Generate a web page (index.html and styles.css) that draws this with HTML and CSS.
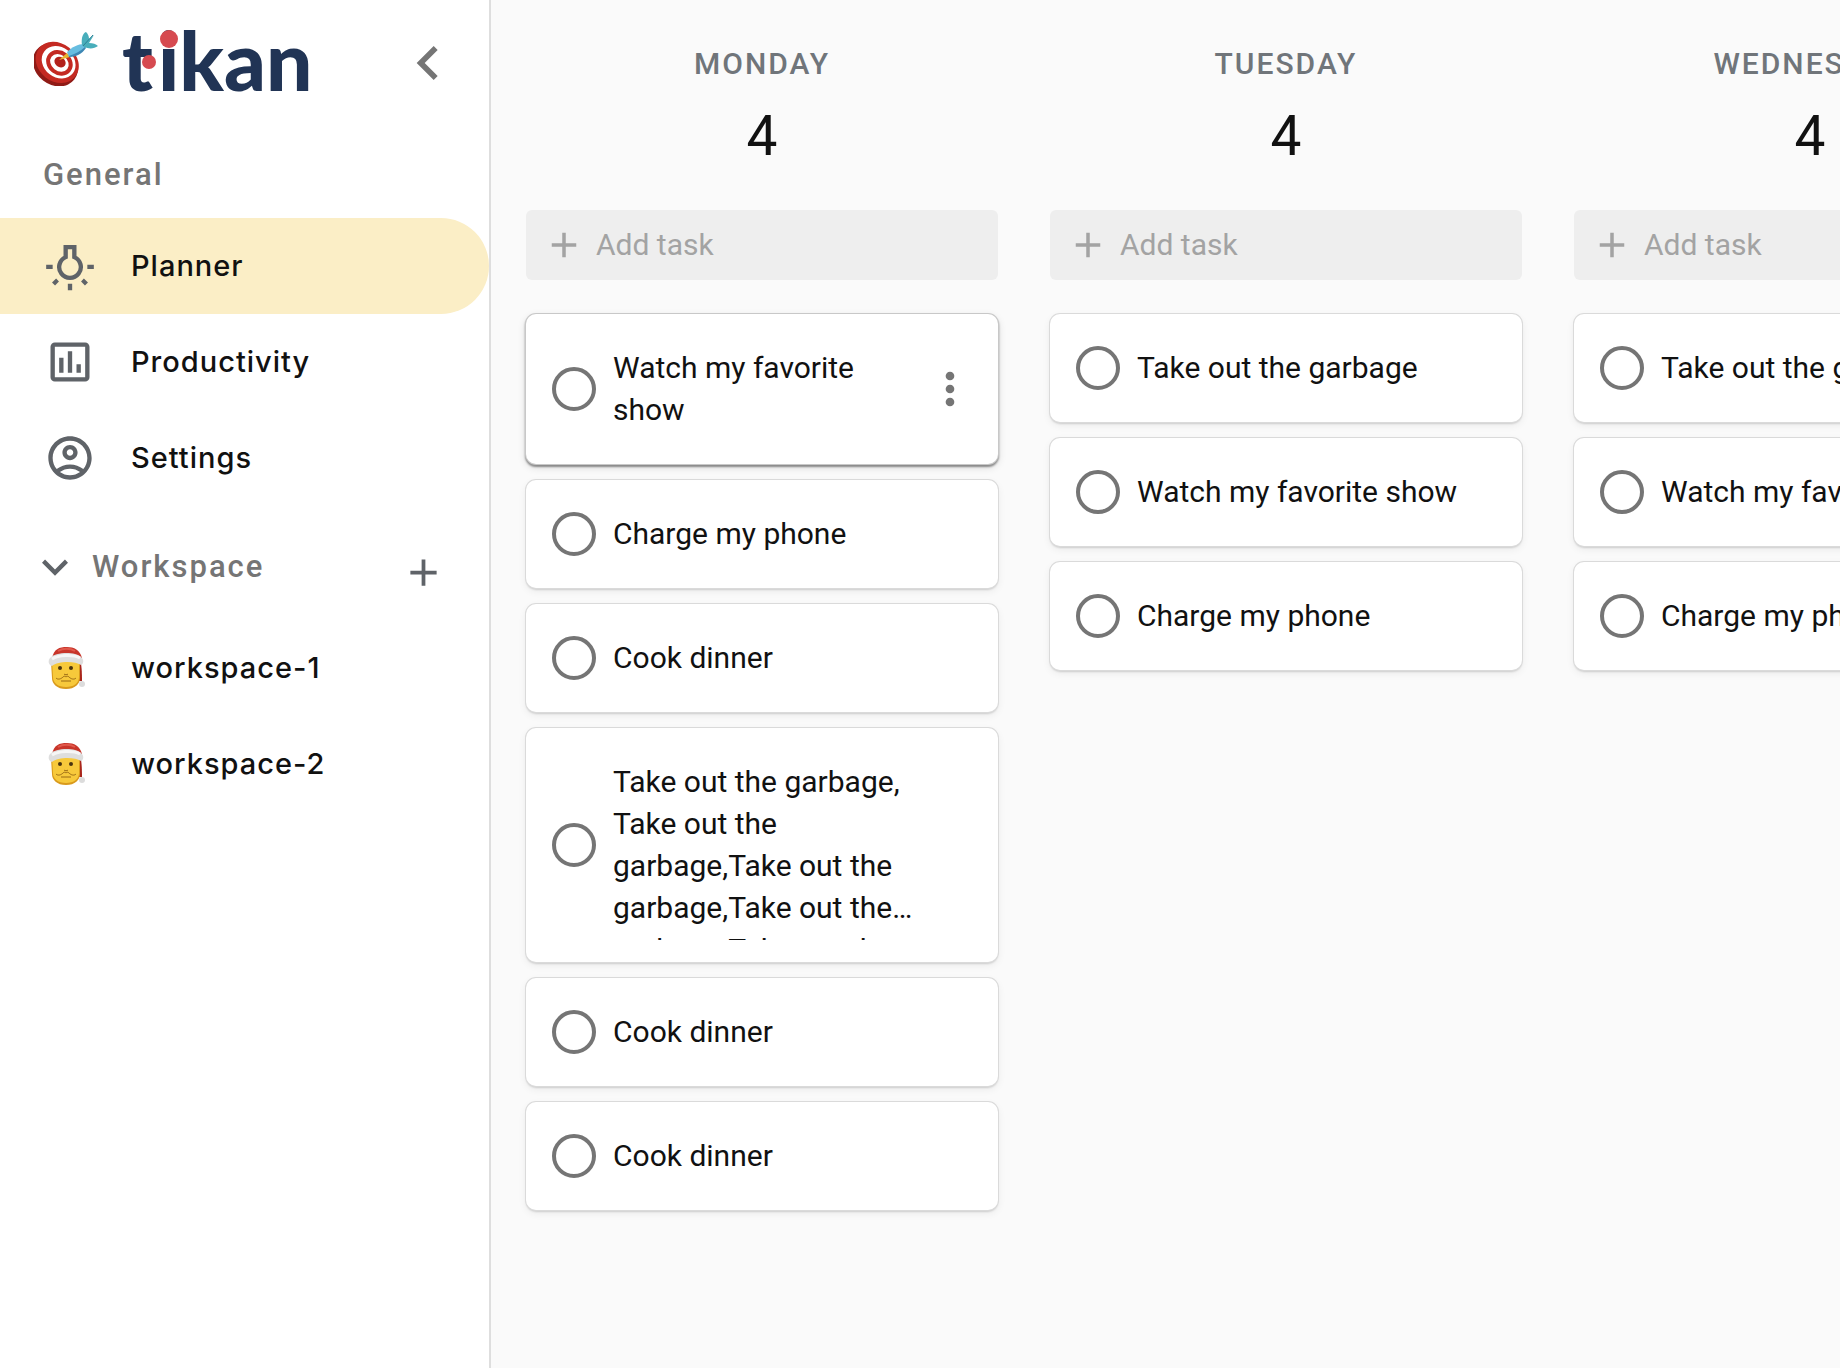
FILE: index.html
```html
<!DOCTYPE html>
<html lang="en">
<head>
<meta charset="utf-8">
<meta name="viewport" content="width=device-width, initial-scale=1">
<title>tikan - Planner</title>
<link rel="stylesheet" href="styles.css">
</head>
<body>
<svg class="sprite" aria-hidden="true">
  <symbol id="plus" viewBox="0 0 24 24"><path d="M19 13h-6v6h-2v-6H5v-2h6V5h2v6h6v2z"/></symbol>
  <symbol id="santa" viewBox="0 0 38 44">
    <path d="M27 4c5 5 7 12 7 31h-4L25 14z" fill="#a9261c"/>
    <path d="M3 16h29v16c0 6-5 11-14 11S4 38 4 32z" fill="#d99a1c"/>
    <path d="M4 15h27v16c0 6-5 10-13 10S5 37 5 31z" fill="#f7c93b"/>
    <path d="M4 12C6 3 11 1 19 1c7 0 13 3 15 11z" fill="#c8352a"/>
    <path d="M10 5c5-3 12-3 17 0" fill="none" stroke="#e0584b" stroke-width="2"/>
    <path d="M2 12c5-6 25-7 31-1 3 2 3 7 0 8-6-4-23-4-29 1-4-1-4-6-2-8z" fill="#dedede"/>
    <path d="M4 13c6-4 21-5 28-1" fill="none" stroke="#f6f6f6" stroke-width="3"/>
    <circle cx="12" cy="22" r="2" fill="#4a3410"/>
    <circle cx="23" cy="22" r="2" fill="#4a3410"/>
    <path d="M16 28c1 1 3 1 4 0M8 32c2 2 5 1 7-1 1-1 2-1 3 0 1-1 2-1 3 0 2 2 5 3 7 1M13 35h10" fill="none" stroke="#9a6a14" stroke-width="1"/>
    <circle cx="34" cy="38" r="3" fill="#dcdcdc"/>
  </symbol>
</svg>
<div class="app">
  <aside class="sidebar">
    <header class="brand">
      <svg class="brand-mark" viewBox="0 0 64 54" aria-hidden="true">
        <g transform="rotate(38 22 32)">
          <ellipse cx="22" cy="33" rx="24" ry="20" fill="#8f1b16"/>
          <ellipse cx="22" cy="30" rx="23" ry="19" fill="#c42a22"/>
          <ellipse cx="23" cy="29" rx="18" ry="15" fill="#fff"/>
          <ellipse cx="24" cy="29" rx="14" ry="12" fill="#c42a22"/>
          <ellipse cx="24" cy="29" rx="10" ry="8" fill="#fff"/>
          <ellipse cx="24" cy="28" rx="6" ry="5" fill="#b3221c"/>
        </g>
        <path d="M25 28l8-7 3 4z" fill="#e8b62f"/>
        <path d="M33 20c5-5 11-8 17-8l2 3c-4 6-10 9-17 10z" fill="#67bde0"/>
        <path d="M35 24c6-2 12-5 16-9l1 1c-4 6-10 9-17 9z" fill="#3d87b4"/>
        <path d="M48 13c-1-7 1-12 4-13 2 2 3 4 3 7l5-4-5 8c4 0 7 1 9 3-4 3-9 3-14 1z" fill="#48aebb"/>
        <path d="M49 14l10-11" stroke="#2d7f94" stroke-width="1"/>
      </svg>
      <svg class="brand-name" viewBox="0 0 200 64" role="img" aria-label="tikan">
        <text x="-1" y="60">t<tspan dx="5">ikan</tspan></text>
        <circle cx="46" cy="8" r="9"/>
        <circle cx="26" cy="31" r="7"/>
      </svg>
      <button class="icon-button collapse" type="button" aria-label="Collapse sidebar">
        <svg viewBox="0 0 24 24"><path d="M15.41 7.41L14 6l-6 6 6 6 1.41-1.41L10.83 12z"/></svg>
      </button>
    </header>

    <h2 class="section-title general">General</h2>
    <nav class="nav">
      <a class="nav-item active" href="#planner">
        <svg class="nav-icon" viewBox="0 0 24 24">
          <path d="M10 3.3h4v4.6a5 5 0 1 1-4 0z" fill="none" stroke="currentColor" stroke-width="2"/>
          <path d="M1 11.4h3v2H1zM20 11.4h3v2h-3zM11 20.2h2v3h-2zM3.7 19.6l1.9-1.8 1.3 1.4-1.8 1.8zM20.3 19.6l-1.9-1.8-1.3 1.4 1.8 1.8z"/>
        </svg>
        <span>Planner</span>
      </a>
      <a class="nav-item" href="#productivity">
        <svg class="nav-icon" viewBox="0 0 24 24"><path d="M9 17H7v-7h2v7zm4 0h-2V7h2v10zm4 0h-2v-4h2v4zm2 2H5V5h14v14zm0-16H5c-1.1 0-2 .9-2 2v14c0 1.1.9 2 2 2h14c1.1 0 2-.9 2-2V5c0-1.1-.9-2-2-2z"/></svg>
        <span>Productivity</span>
      </a>
      <a class="nav-item" href="#settings">
        <svg class="nav-icon" viewBox="0 0 24 24"><path d="M12 2C6.48 2 2 6.48 2 12s4.48 10 10 10 10-4.48 10-10S17.52 2 12 2zM7.35 18.5C8.66 17.56 10.26 17 12 17s3.34.56 4.65 1.5c-1.31.94-2.91 1.5-4.65 1.5s-3.34-.56-4.65-1.5zm10.79-1.38C16.45 15.8 14.32 15 12 15s-4.45.8-6.14 2.12C4.7 15.73 4 13.95 4 12c0-4.42 3.58-8 8-8s8 3.58 8 8c0 1.95-.7 3.73-1.86 5.12zM12 6c-1.93 0-3.5 1.57-3.5 3.5S10.07 13 12 13s3.5-1.57 3.5-3.5S13.93 6 12 6zm0 5c-.83 0-1.5-.67-1.5-1.5S11.17 8 12 8s1.5.67 1.5 1.5S12.83 11 12 11z"/></svg>
        <span>Settings</span>
      </a>
    </nav>

    <div class="workspace-head">
      <button class="icon-button toggle" type="button" aria-label="Toggle workspaces">
        <svg viewBox="0 0 24 24"><path d="M16.59 8.59L12 13.17 7.41 8.59 6 10l6 6 6-6z"/></svg>
      </button>
      <h2 class="section-title">Workspace</h2>
      <button class="icon-button add" type="button" aria-label="Add workspace">
        <svg><use href="#plus"/></svg>
      </button>
    </div>
    <nav class="nav">
      <a class="nav-item" href="#workspace-1"><svg class="avatar"><use href="#santa"/></svg><span>workspace-1</span></a>
      <a class="nav-item" href="#workspace-2"><svg class="avatar"><use href="#santa"/></svg><span>workspace-2</span></a>
    </nav>
  </aside>

  <main class="board">
    <section class="column">
      <h2 class="day">Monday</h2>
      <p class="date">4</p>
      <button class="add-task" type="button"><svg><use href="#plus"/></svg>Add task</button>
      <ul class="tasks">
        <li class="card raised">
          <input type="checkbox" id="m1"><label for="m1">Watch my favorite show</label>
          <button class="icon-button menu" type="button" aria-label="Task menu">
            <svg viewBox="0 0 24 24"><circle cx="12" cy="6" r="2"/><circle cx="12" cy="12" r="2"/><circle cx="12" cy="18" r="2"/></svg>
          </button>
        </li>
        <li class="card"><input type="checkbox" id="m2"><label for="m2">Charge my phone</label></li>
        <li class="card"><input type="checkbox" id="m3"><label for="m3">Cook dinner</label></li>
        <li class="card"><input type="checkbox" id="m4"><label for="m4">Take out the garbage, Take out the garbage,Take out the garbage,Take out the garbage,Take out the garbage,Take out the garbage</label></li>
        <li class="card"><input type="checkbox" id="m5"><label for="m5">Cook dinner</label></li>
        <li class="card"><input type="checkbox" id="m6"><label for="m6">Cook dinner</label></li>
      </ul>
    </section>
    <section class="column">
      <h2 class="day">Tuesday</h2>
      <p class="date">4</p>
      <button class="add-task" type="button"><svg><use href="#plus"/></svg>Add task</button>
      <ul class="tasks">
        <li class="card"><input type="checkbox" id="t1"><label for="t1">Take out the garbage</label></li>
        <li class="card"><input type="checkbox" id="t2"><label for="t2">Watch my favorite show</label></li>
        <li class="card"><input type="checkbox" id="t3"><label for="t3">Charge my phone</label></li>
      </ul>
    </section>
    <section class="column">
      <h2 class="day">Wednesday</h2>
      <p class="date">4</p>
      <button class="add-task" type="button"><svg><use href="#plus"/></svg>Add task</button>
      <ul class="tasks">
        <li class="card"><input type="checkbox" id="w1"><label for="w1">Take out the garbage</label></li>
        <li class="card"><input type="checkbox" id="w2"><label for="w2">Watch my favorite show</label></li>
        <li class="card"><input type="checkbox" id="w3"><label for="w3">Charge my phone</label></li>
      </ul>
    </section>
  </main>
</div>
</body>
</html>
```
FILE: styles.css
```css
* {
  box-sizing: border-box;
}

body {
  margin: 0;
  background: #fafafa;
  color: #111;
  font: 400 30px/42px Roboto, sans-serif;
}

h2,
p,
ul {
  margin: 0;
  padding: 0;
}

svg {
  display: block;
  fill: currentColor;
  flex: none;
}

button {
  font: inherit;
  border: 0;
  padding: 0;
  cursor: pointer;
}

.sprite {
  position: absolute;
  width: 0;
  height: 0;
}

.app {
  display: grid;
  grid-template-columns: 491px minmax(0, 1fr);
  min-height: 100vh;
}

/* Sidebar */
.sidebar {
  background: #fff;
  border-right: 2px solid #dedede;
}

.brand {
  display: flex;
  align-items: flex-start;
  padding: 29px 27px 0 34px;
  height: 154px;
}

.brand-mark {
  width: 64px;
  height: 54px;
  margin: 3px 25px 0 0;
}

.brand-name {
  width: 200px;
  height: 64px;
  margin-top: 2px;
  overflow: visible;
  color: #213455;
  font: 900 82px/64px Lato, sans-serif;
  font-variant-ligatures: none;
}

.brand-name circle {
  fill: #d64a50;
}

.icon-button {
  flex: none;
  background: none;
  color: #5f6368;
}

.collapse {
  margin-left: auto;
  color: #757575;
}

.collapse svg {
  width: 68px;
  height: 68px;
}

.section-title {
  color: #757575;
  font-size: 31px;
  font-weight: 500;
  line-height: 42px;
  letter-spacing: 2px;
}

.general {
  padding-left: 43px;
  margin-bottom: 22px;
}

.nav-item {
  display: flex;
  align-items: center;
  gap: 35px;
  height: 96px;
  padding-left: 44px;
  border-radius: 0 48px 48px 0;
  color: #111;
  font: 500 29px/42px Inter, sans-serif;
  letter-spacing: 1px;
  text-decoration: none;
}

.active {
  background: #fbeec6;
}

.nav-icon {
  width: 52px;
  height: 52px;
  color: #5f6368;
}

.avatar {
  width: 38px;
  height: 44px;
  margin: 0 10px 0 4px;
}

.workspace-head {
  display: flex;
  align-items: center;
  height: 114px;
  padding: 8px 43px 0 29px;
}

.toggle svg {
  width: 52px;
  height: 52px;
}

.toggle {
  margin-right: 11px;
}

.add {
  margin: 10px 0 0 auto;
}

.add svg {
  width: 45px;
  height: 45px;
}

/* Board */
.board {
  display: flex;
  align-items: flex-start;
  gap: 52px;
  padding: 43px 35px 36px;
  overflow-x: auto;
  scrollbar-width: none;
}

.column {
  flex: 0 0 472px;
}

.day {
  color: #70757a;
  font-size: 30px;
  font-weight: 500;
  line-height: 42px;
  letter-spacing: 2px;
  text-align: center;
  text-transform: uppercase;
}

.date {
  margin-top: 18px;
  font-size: 55px;
  line-height: 66px;
  text-align: center;
}

.add-task {
  display: flex;
  align-items: center;
  gap: 11px;
  width: 100%;
  height: 70px;
  margin-top: 41px;
  padding-left: 17px;
  border-radius: 6px;
  background: #eee;
  color: #a3a3a3;
}

.add-task svg {
  width: 42px;
  height: 42px;
}

.tasks {
  display: grid;
  gap: 16px;
  margin-top: 34px;
  list-style: none;
}

.card {
  display: flex;
  align-items: center;
  padding: 22px;
  border-radius: 10px;
  background: #fff;
  box-shadow: 0 0 0 1px #dadada, 0 2px 2px rgba(0, 0, 0, .14), 0 3px 8px rgba(0, 0, 0, .07);
}

.raised {
  box-shadow: 0 0 0 1px #c8c8c8, 0 2px 2px 1px rgba(0, 0, 0, .4), 0 3px 8px rgba(0, 0, 0, .15);
}

.card input {
  flex: none;
  appearance: none;
  width: 44px;
  height: 44px;
  margin: 0 17px 0 4px;
  border: 4px solid #757575;
  border-radius: 50%;
}

.card input:checked {
  background: #757575;
}

/* Clamps at four lines; the padding lets the tops of the next line through. */
.card label {
  flex: 1;
  display: -webkit-box;
  -webkit-box-orient: vertical;
  -webkit-line-clamp: 4;
  overflow: hidden;
  padding: 11px 22px 11px 0;
}

.raised label {
  padding-right: 0;
}

.menu svg {
  width: 52px;
  height: 52px;
  color: #757575;
}
```
